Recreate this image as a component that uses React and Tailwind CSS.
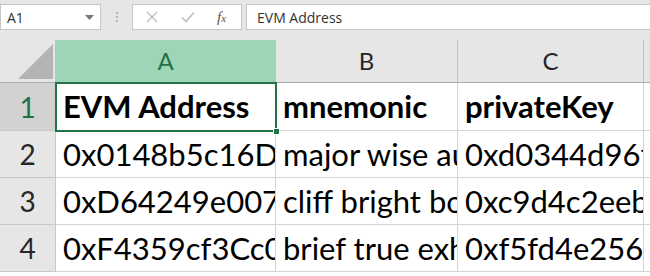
import React from "react";

const cellFont = { fontFamily: "Lato, 'Noto Sans', sans-serif" };

const rows = [
  { n: "1", h: "h-[48px]", a: "EVM Address", b: "mnemonic", c: "privateKey", bold: true },
  { n: "2", h: "h-[47px]", a: "0x0148b5c16D7aF3e2", b: "major wise audit tone", c: "0xd0344d96fb8a21c7" },
  { n: "3", h: "h-[47px]", a: "0xD64249e007D1bA90", b: "cliff bright boat lamp", c: "0xc9d4c2eeb93f0d12" },
  { n: "4", h: "h-[47px]", a: "0xF4359cf3Cc04e8A1", b: "brief true exhibit fog", c: "0xf5fd4e25659b0c3e" },
];

const FormulaBar = () => (
  <div className="h-[40px] bg-[#e6e6e6] flex items-start pt-[4px] text-[14px]" style={{ fontFamily: "'Open Sans', 'Noto Sans', sans-serif" }}>
    <div className="w-[101px] h-[26px] bg-white border border-[#c6c6c6] flex items-center justify-between pl-[6px] pr-[6px] text-[#333]">
      <span>A1</span>
      <svg width="9" height="5" viewBox="0 0 9 5"><path d="M0 0h9L4.5 5z" fill="#777" /></svg>
    </div>
    <div className="w-[31px] h-[26px] flex flex-col items-center justify-center gap-[2px]">
      <span className="w-[2px] h-[2px] bg-[#b5b5b5]" />
      <span className="w-[2px] h-[2px] bg-[#b5b5b5]" />
      <span className="w-[2px] h-[2px] bg-[#b5b5b5]" />
    </div>
    <div className="w-[110px] h-[26px] bg-white border border-[#c6c6c6] flex items-center">
      <svg className="ml-[13px]" width="12" height="12" viewBox="0 0 12 12">
        <path d="M1 1l10 10M11 1L1 11" stroke="#bdbdbd" strokeWidth="1.3" />
      </svg>
      <svg className="ml-[23px]" width="14" height="12" viewBox="0 0 14 12">
        <path d="M1 6.5l4 4L13 1.5" stroke="#bdbdbd" strokeWidth="1.6" fill="none" />
      </svg>
      <span className="ml-[22px] italic text-[#555] text-[15px]" style={{ fontFamily: "'Liberation Serif', serif" }}>
        f<span className="text-[11px]">x</span>
      </span>
    </div>
    <div className="ml-[4px] flex-1 h-[26px] bg-white border border-[#c6c6c6] border-r-0 flex items-center pl-[10px] text-[#333]">
      EVM Address
    </div>
  </div>
);

const Header = () => (
  <div className="flex h-[43px] border-b border-[#ababab]" style={cellFont}>
    <div className="w-[56px] bg-[#e6e6e6] border-r border-[#c0c0c0] relative">
      <svg className="absolute left-[18px] top-[4px]" width="35" height="35" viewBox="0 0 35 35">
        <path d="M35 0V35H0z" fill="#b4b4b4" />
      </svg>
    </div>
    <div className="w-[220px] bg-[#9fd5b7] border-r border-[#c0c0c0] flex items-center justify-center text-[24px] text-[#217346]">A</div>
    <div className="w-[182px] bg-[#e6e6e6] border-r border-[#c0c0c0] flex items-center justify-center text-[24px] text-[#262626]">B</div>
    <div className="w-[186px] bg-[#e6e6e6] border-r border-[#c0c0c0] flex items-center justify-center text-[24px] text-[#262626]">C</div>
    <div className="flex-1 bg-[#e6e6e6]" />
  </div>
);

const Cell = ({ w, children, bold }) => (
  <div className={`${w} border-r border-b border-[#d4d4d4] flex items-center pl-[7px] overflow-hidden whitespace-nowrap text-[31px] text-black ${bold ? "font-bold" : ""}`}>
    {children}
  </div>
);

export default function App() {
  return (
    <div className="w-[650px] h-[276px] overflow-hidden bg-white">
      <FormulaBar />
      <Header />
      <div className="relative" style={cellFont}>
        {rows.map((r, i) => (
          <div key={r.n} className={`flex ${r.h}`}>
            <div
              className={`w-[56px] border-r border-b border-[#c8c8c8] flex items-center justify-center text-[28px] ${
                i === 0 ? "bg-[#d2d2d2] text-[#217346]" : "bg-[#e6e6e6] text-[#262626]"
              }`}
            >
              {r.n}
            </div>
            <Cell w="w-[220px]" bold={r.bold}>{r.a}</Cell>
            <Cell w="w-[182px]" bold={r.bold}>{r.b}</Cell>
            <Cell w="w-[186px]" bold={r.bold}>{r.c}</Cell>
            <div className="flex-1 border-b border-[#d4d4d4]" />
          </div>
        ))}
        <div className="absolute left-[55px] top-[-1px] w-[222px] h-[50px] border-2 border-[#217346] pointer-events-none" />
        <div className="absolute left-[273px] top-[45px] w-[7px] h-[7px] bg-[#217346] border border-white" />
      </div>
    </div>
  );
}
